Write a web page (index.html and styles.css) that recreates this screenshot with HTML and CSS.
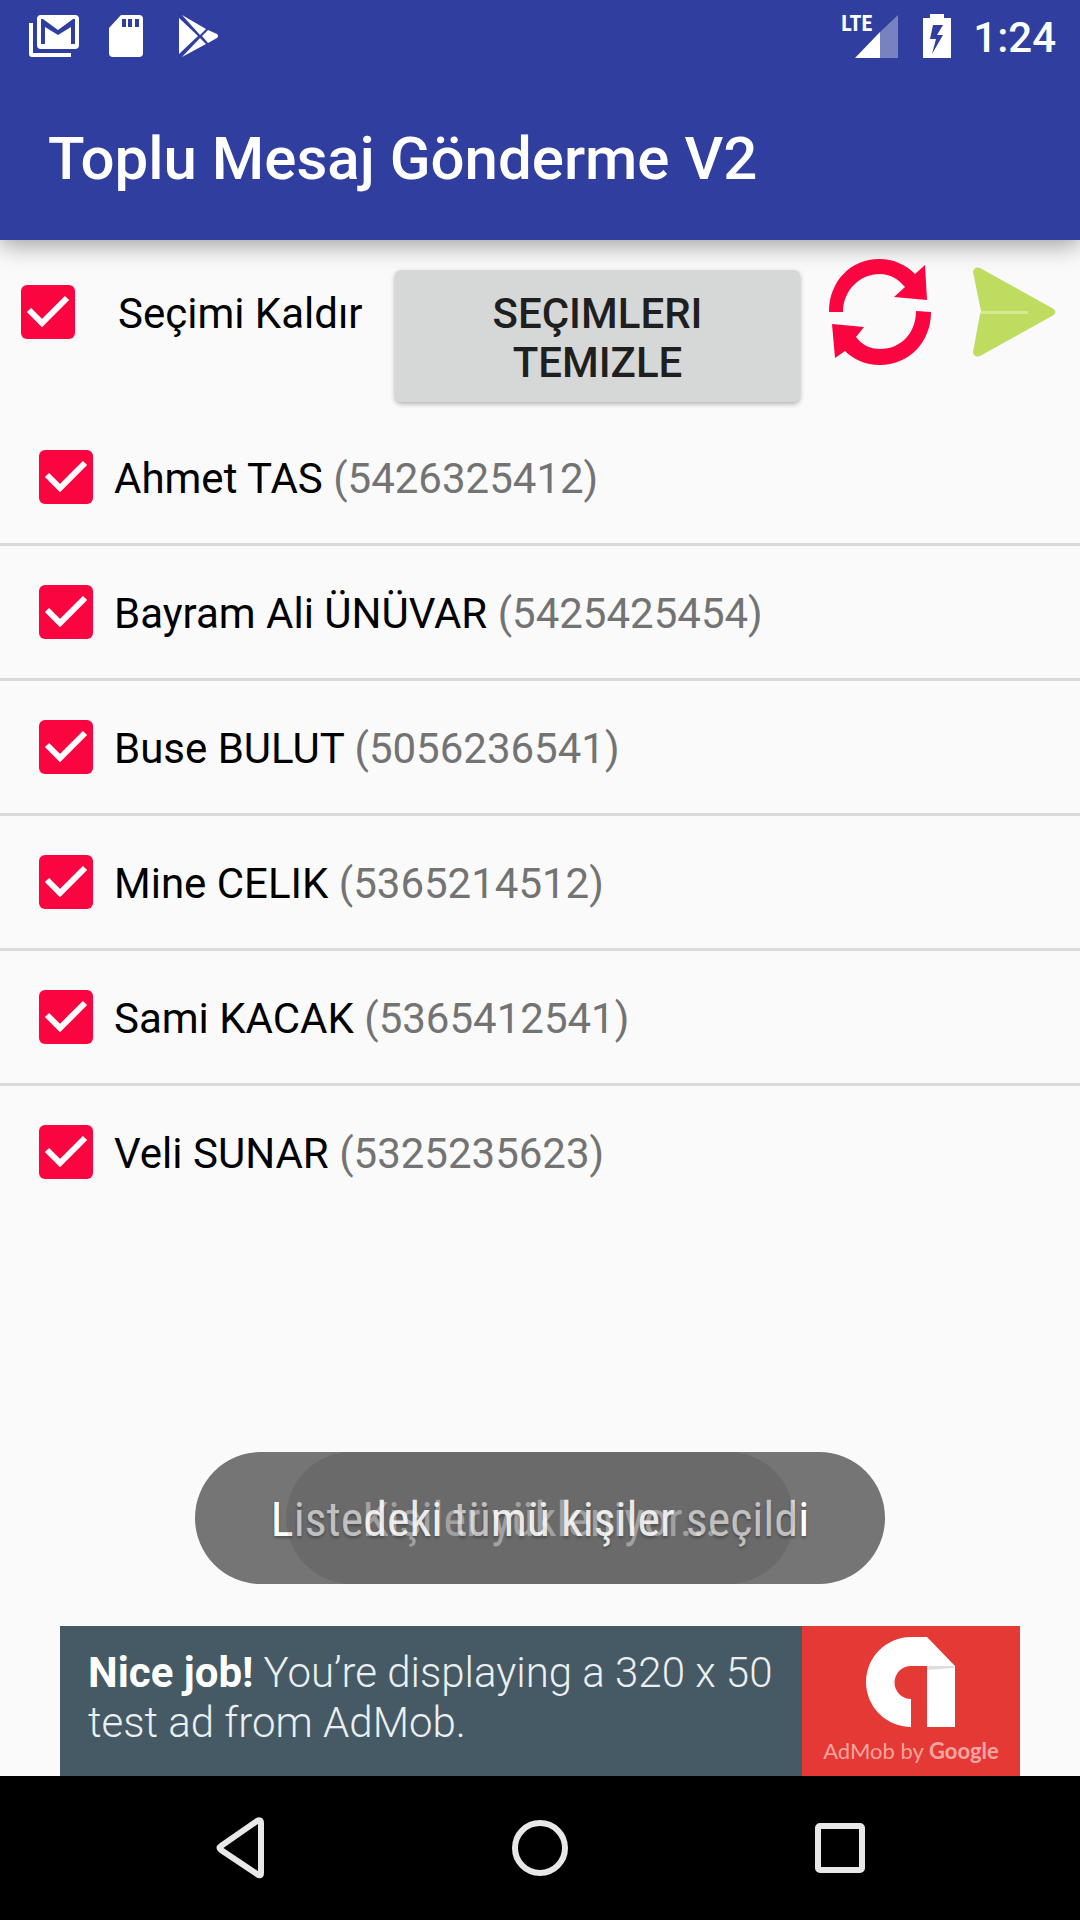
FILE: index.html
```html
<!DOCTYPE html>
<html lang="tr">
<head>
<meta charset="utf-8">
<meta name="viewport" content="width=device-width">
<title>Toplu Mesaj Gönderme V2</title>
<link rel="stylesheet" href="styles.css">
</head>
<body>
<header class="top">
  <div class="status">
    <svg width="51" height="44" viewBox="0 0 51 44"><path fill="#fff" d="M0 9h4v30h38v4H3q-3 0-3-3zM12 1h34q4 0 4 4v26q0 4-4 4H12q-4 0-4-4V5q0-4 4-4z"/><path fill="#303f9f" d="M12 5h2l15 11L44 5h2v25h-4V13l-13 8-13-8v17h-4z"/></svg>
    <svg class="sd" width="34" height="44" viewBox="0 0 34 44"><path fill="#fff" fill-rule="evenodd" d="M12 1h18q4 0 4 4v34q0 4-4 4H4q-4 0-4-4V14zM13 5v8h4V5zM19 5v8h4V5zM26 5v8h4V5z"/></svg>
    <svg class="play" width="40" height="44" viewBox="0 0 40 44"><path fill="#fff" d="M0 4l19 18L0 40zM3 1l24 14-6 6zM3 43l18-19 6 6zM29 16l9 4q2 2 0 4l-9 5-6-7z"/></svg>
    <div class="signal"><span class="lte">LTE</span><svg width="43" height="43" viewBox="0 0 43 43"><path fill="#fff" opacity=".35" d="M25 17L43 0v43H25z"/><path fill="#fff" d="M0 43l25-26v26z"/></svg></div>
    <svg class="battery" width="28" height="44" viewBox="0 0 28 44"><path fill="#fff" fill-rule="evenodd" d="M7 0h14v4h7v40H0V4h7zM10 11L7 25h6L9 40l11-19h-6l6-10z"/></svg>
    <time class="clock">1:24</time>
  </div>
  <h1 class="title">Toplu Mesaj Gönderme V2</h1>
</header>
<main class="content">
  <div class="toolbar">
    <label class="pick-all"><input class="check" type="checkbox" checked><span class="label">Seçimi Kaldır</span></label>
    <button class="clear" type="button">SEÇIMLERI TEMIZLE</button>
    <button class="icon-btn refresh" type="button" aria-label="Yenile"><svg width="102" height="106" viewBox="0 0 102 106"><path fill="#fa0540" d="M0 53C0 22 22 0 50 0c15 0 27 6 36 15L96 6l2 35-33-3 11-10C69 20 61 15 51 15 30 15 14 32 14 53zM102 53c0 31-23 53-51 53-15 0-27-6-35-14L6 99 3 65l32 3-8 10c6 8 14 12 24 12 21 0 36-16 36-38z"/></svg></button>
    <button class="icon-btn send" type="button" aria-label="Gönder"><svg width="83" height="90" viewBox="0 0 83 90"><path fill="#bedd60" d="M0 5q1-6 7-4l72 40q7 4 0 8L7 89q-6 2-7-4l7-38h47v-3H8z"/><path fill="#d5eb91" d="M8 44h47v3H7z"/></svg></button>
  </div>
  <ul class="people">
    <li><label class="person"><input class="check" type="checkbox" checked><span class="label">Ahmet TAS <span class="phone">(5426325412)</span></span></label></li>
    <li><label class="person"><input class="check" type="checkbox" checked><span class="label">Bayram Ali ÜNÜVAR <span class="phone">(5425425454)</span></span></label></li>
    <li><label class="person"><input class="check" type="checkbox" checked><span class="label">Buse BULUT <span class="phone">(5056236541)</span></span></label></li>
    <li><label class="person"><input class="check" type="checkbox" checked><span class="label">Mine CELIK <span class="phone">(5365214512)</span></span></label></li>
    <li><label class="person"><input class="check" type="checkbox" checked><span class="label">Sami KACAK <span class="phone">(5365412541)</span></span></label></li>
    <li><label class="person"><input class="check" type="checkbox" checked><span class="label">Veli SUNAR <span class="phone">(5325235623)</span></span></label></li>
  </ul>
</main>
<footer class="bottom">
  <div class="toasts">
    <div class="toast selected"><span class="lit">L</span>iste<span class="lit">deki</span> tü<span class="lit">mü kişiler</span> seçild<span class="lit">i</span></div>
    <div class="toast loading">Kişiler yükleniyor...</div>
  </div>
  <a class="ad" href="#">
    <span class="ad-text"><b>Nice job!</b> You’re displaying a 320 x 50 test ad from AdMob.</span>
    <span class="ad-brand">
      <svg width="90" height="90" viewBox="0 0 90 90"><path fill="#fff" d="M45 0h16l28 29v61H61V29H45a16 16 0 0 0 0 33v28A45 45 0 0 1 45 0z"/><path fill="#ddd" d="M61 29h27v2l-27 2z"/></svg>
      <span class="ad-name">AdMob by <b>Google</b></span>
    </span>
  </a>
  <nav class="nav">
    <button type="button" aria-label="Geri"><svg width="60" height="80" viewBox="0 0 60 80"><path d="M51 15v50q0 4-4 1L11 42q-3-2 0-4l36-25q4-2 4 2z"/></svg></button>
    <button type="button" aria-label="Ana ekran"><svg width="60" height="80" viewBox="0 0 60 80"><circle cx="30" cy="40" r="25"/></svg></button>
    <button type="button" aria-label="Son uygulamalar"><svg width="60" height="80" viewBox="0 0 60 80"><rect x="8" y="18" width="44" height="44" rx="2"/></svg></button>
  </nav>
</footer>
</body>
</html>
```
FILE: styles.css
```css
* { box-sizing: border-box; }
body {
  margin: 0;
  min-height: 100vh;
  display: flex;
  flex-direction: column;
  background: #fafafa;
  color: #000;
  font-family: Roboto, sans-serif;
  font-size: 42px;
  line-height: 49px;
}
button {
  border: 0;
  padding: 0;
  background: none;
  font: inherit;
}
svg { display: block; flex: none; }

.top {
  background: #303f9f;
  color: #fff;
  box-shadow: 0 4px 24px rgba(0, 0, 0, .4);
}
.status {
  display: flex;
  align-items: center;
  height: 72px;
  padding: 0 24px 0 29px;
}
.sd { margin-left: 29px; }
.play { margin-left: 36px; }
.signal {
  position: relative;
  margin-left: auto;
}
.lte {
  position: absolute;
  right: 26px;
  top: -4px;
  font-family: "Roboto Condensed", Roboto, sans-serif;
  font-size: 22px;
  line-height: 26px;
  font-weight: 700;
}
.battery { margin: 0 22px 0 25px; }
.clock {
  font-weight: 500;
  padding-top: 2px;
}
.title {
  margin: 0;
  padding: 52px 48px 46px;
  font-size: 60px;
  line-height: 70px;
  font-weight: 500;
}

.toolbar {
  display: flex;
  align-items: flex-start;
  height: 171px;
  padding: 19px 24px 0 21px;
}
.pick-all {
  display: flex;
  align-items: center;
  gap: 43px;
  width: 374px;
  padding-top: 26px;
}
.label { padding-top: 2px; }
.check {
  appearance: none;
  flex: none;
  width: 54px;
  height: 54px;
  margin: 0;
  border-radius: 6px;
  background: #fa0540 url("data:image/svg+xml,%3Csvg xmlns='http://www.w3.org/2000/svg' viewBox='0 0 54 54'%3E%3Cpath fill='none' stroke='%23fff' stroke-width='6' d='M8 25l13 13 25-25'/%3E%3C/svg%3E");
}
.clear {
  flex: 1;
  margin-top: 11px;
  padding: 19px 60px 15px;
  border-radius: 6px;
  background: #d6d7d7;
  color: #1f1f1f;
  font-weight: 500;
  box-shadow: 0 2px 5px rgba(0, 0, 0, .3);
}
.refresh { margin-left: 29px; }
.send { margin: 8px 0 0 42px; }

.people {
  margin: 0;
  padding: 0;
  list-style: none;
}
.people li + li { border-top: 3px solid #dadada; }
.person {
  display: flex;
  align-items: center;
  gap: 21px;
  height: 132px;
  padding: 0 39px;
}
.phone { color: #737373; }

.bottom { margin-top: auto; }
.toasts {
  display: grid;
  justify-items: center;
  margin-bottom: 42px;
}
.toast {
  grid-area: 1 / 1;
  padding: 40px 76px 36px;
  border-radius: 66px;
  font-family: "Roboto Condensed", Roboto, sans-serif;
  font-size: 48px;
  line-height: 56px;
  white-space: nowrap;
}
.selected {
  background: #757575;
  color: #d4d4d4;
  text-shadow: 0 2px 3px rgba(0, 0, 0, .3);
}
.lit { color: #fff; }
.loading {
  background: rgba(0, 0, 0, .09);
  color: rgba(255, 255, 255, .4);
}

.ad {
  display: flex;
  height: 150px;
  margin: 0 60px;
  background: #455a64;
  color: #eceff1;
  text-decoration: none;
}
.ad-text {
  flex: 1;
  padding: 22px 20px 0 28px;
  font-size: 42px;
  line-height: 50px;
  font-weight: 300;
}
.ad-text b { font-weight: 700; color: #fff; }
.ad-brand {
  display: flex;
  flex-direction: column;
  align-items: center;
  width: 218px;
  padding-top: 11px;
  background: #e53935;
}
.ad-name {
  margin-top: 10px;
  font-family: Lato, sans-serif;
  font-size: 22px;
  line-height: 28px;
  color: #f8a5a0;
}
.nav {
  display: flex;
  justify-content: center;
  align-items: center;
  gap: 240px;
  height: 144px;
  background: #000;
}
.nav svg {
  fill: none;
  stroke: #e8e8e8;
  stroke-width: 6;
}
```
